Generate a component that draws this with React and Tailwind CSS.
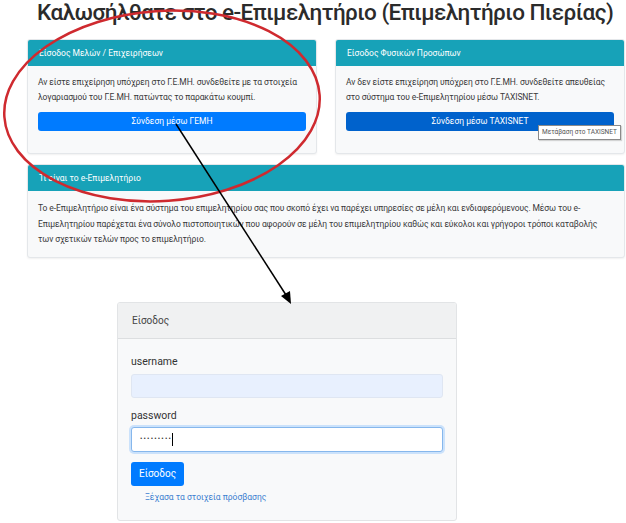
import React from "react";

export default function App() {
  return (
    <div className="relative w-[626px] h-[523px] overflow-hidden bg-white font-['Roboto',sans-serif] text-[#333]">
      <h1 className="ml-[37px] mt-[-3px] text-[22.5px] leading-[30px] font-medium tracking-[-0.55px] text-[#2b2b2b] whitespace-nowrap">
        Καλωσήλθατε στο e-Επιμελητήριο (Επιμελητήριο Πιερίας)
      </h1>

      <div className="ml-[27px] mr-[1px] mt-[12px]">
        <div className="grid grid-cols-2 gap-[18px]">
          <div className="rounded-[3px] border border-[#e4e7ea] bg-[#f8f9fa] shadow-[0_1px_2px_rgba(0,0,0,0.06)] overflow-hidden">
            <div className="h-[26px] bg-[#17a2b8] px-[11px] flex items-center text-white text-[8.5px]">
              Είσοδος Μελών / Επιχειρήσεων
            </div>
            <div className="px-[10px] pt-[9px] pb-[22px]">
              <p className="text-[8.5px] leading-[15px] tracking-[-0.1px] text-[#3a3a3a] whitespace-nowrap">
                Αν είστε επιχείρηση υπόχρεη στο Γ.Ε.ΜΗ. συνδεθείτε με τα στοιχεία
                <br />
                λογαριασμού του Γ.Ε.ΜΗ. πατώντας το παρακάτω κουμπί.
              </p>
              <div className="mt-[7px] h-[19px] rounded-[3px] bg-[#007bff] flex items-center justify-center text-white text-[8.5px]">
                Σύνδεση μέσω ΓΕΜΗ
              </div>
            </div>
          </div>

          <div className="rounded-[3px] border border-[#e4e7ea] bg-[#f8f9fa] shadow-[0_1px_2px_rgba(0,0,0,0.06)] overflow-hidden">
            <div className="h-[26px] bg-[#17a2b8] px-[11px] flex items-center text-white text-[8.5px]">
              Είσοδος Φυσικών Προσώπων
            </div>
            <div className="px-[10px] pt-[9px] pb-[22px]">
              <p className="text-[8.5px] leading-[15px] tracking-[-0.1px] text-[#3a3a3a] whitespace-nowrap">
                Αν δεν είστε επιχείρηση υπόχρεη στο Γ.Ε.ΜΗ. συνδεθείτε απευθείας
                <br />
                στο σύστημα του e-Επιμελητηρίου μέσω TAXISNET.
              </p>
              <div className="mt-[7px] h-[19px] rounded-[3px] bg-[#0062cc] flex items-center justify-center text-white text-[8.5px]">
                Σύνδεση μέσω TAXISNET
              </div>
            </div>
          </div>
        </div>

        <div className="mt-[10px] rounded-[3px] border border-[#e4e7ea] bg-[#f8f9fa] shadow-[0_1px_2px_rgba(0,0,0,0.06)] overflow-hidden">
          <div className="h-[26px] bg-[#17a2b8] px-[11px] flex items-center text-white text-[8.5px]">
            Τι είναι το e-Επιμελητήριο
          </div>
          <div className="px-[10px] pt-[10px] pb-[9px]">
            <p className="text-[8.5px] leading-[15.5px] tracking-[-0.1px] text-[#3a3a3a] whitespace-nowrap">
              Το e-Επιμελητήριο είναι ένα σύστημα του επιμελητηρίου σας που σκοπό έχει να παρέχει υπηρεσίες σε μέλη και ενδιαφερόμενους. Μέσω του e-
              <br />
              Επιμελητηρίου παρέχεται ένα σύνολο πιστοποιητικών που αφορούν σε μέλη του επιμελητηρίου καθώς και εύκολοι και γρήγοροι τρόποι καταβολής
              <br />
              των σχετικών τελών προς το επιμελητήριο.
            </p>
          </div>
        </div>
      </div>

      <div className="ml-[117px] mt-[44px] w-[340px] rounded-[3px] border border-[#e2e4e6] bg-[#f8f9fa] overflow-hidden">
        <div className="h-[36px] bg-[#f0f1f2] border-b border-[#dcdee0] px-[14px] flex items-center text-[10px] text-[#444]">
          Είσοδος
        </div>
        <div className="px-[13px] pt-[16px] pb-[17px]">
          <div className="text-[10.5px] leading-[14px] text-[#333]">username</div>
          <div className="mt-[5px] h-[24px] rounded-[3px] border border-[#dfe6f2] bg-[#e8f0fe]"></div>
          <div className="mt-[11px] text-[10.5px] leading-[14px] text-[#333]">password</div>
          <div className="mt-[4px] h-[25px] rounded-[3px] border border-[#86b7ec] bg-white shadow-[0_0_0_2px_rgba(0,123,255,0.18)] flex items-center px-[8px]">
            <span className="text-[7px] tracking-[1.2px] text-[#333]">•••••••••</span>
            <span className="h-[13px] w-[1px] bg-black"></span>
          </div>
          <div className="mt-[10px] w-[53px] h-[24px] rounded-[3px] bg-[#007bff] flex items-center justify-center text-white text-[10px]">
            Είσοδος
          </div>
          <div className="mt-[5px] ml-[14px] text-[8.5px] leading-[12px] text-[#3d7fd0]">
            Ξέχασα τα στοιχεία πρόσβασης
          </div>
        </div>
      </div>

      <div className="absolute left-[538px] top-[125px] h-[15px] px-[3px] border border-[#8a8a8a] bg-white flex items-center text-[6.5px] text-[#555] whitespace-nowrap shadow-[1px_1px_1px_rgba(0,0,0,0.15)]">
        Μετάβαση στο TAXISNET
      </div>

      <svg className="absolute inset-0 pointer-events-none" width="626" height="523" viewBox="0 0 626 523">
        <ellipse cx="162" cy="106" rx="158" ry="95" transform="rotate(-4 162 106)" fill="none" stroke="#cf2a2f" strokeWidth="2.5" />
        <line x1="176" y1="124" x2="286" y2="295" stroke="#000" strokeWidth="1.5" />
        <polygon points="291,304 281,296 290,291" fill="#000" />
      </svg>
    </div>
  );
}
